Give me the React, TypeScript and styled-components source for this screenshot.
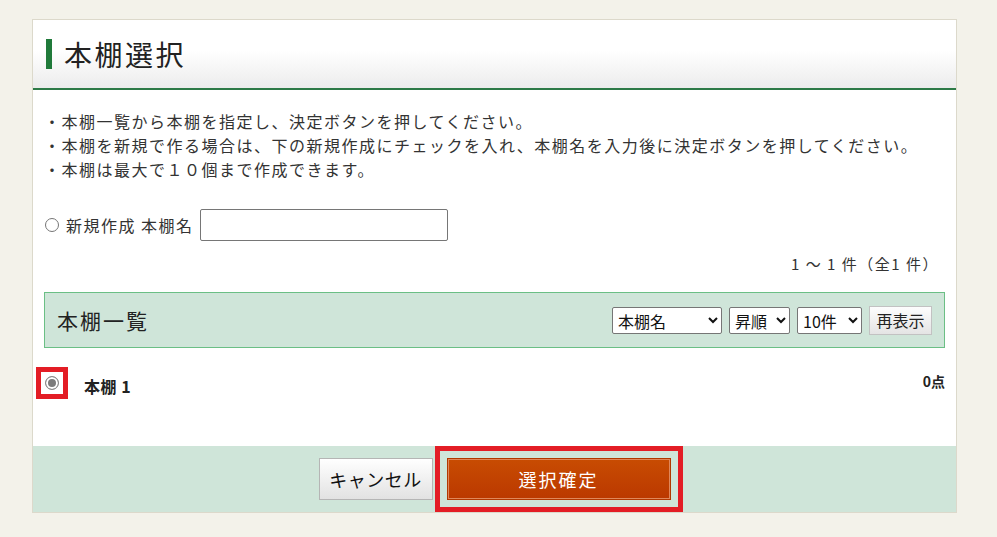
import styled, { createGlobalStyle } from 'styled-components';

const GlobalStyle = createGlobalStyle`
  body {
    margin: 0;
    background: #f3f2ea;
    font-family: "Noto Sans CJK JP", "Noto Sans", sans-serif;
    color: #333;
  }
`;

const Page = styled.div`
  padding: 19px 0 24px 32px;
`;

const Panel = styled.div`
  width: 923px;
  background: #fff;
  border: 1px solid #dcd9cb;
`;

const Header = styled.div`
  display: flex;
  align-items: center;
  height: 68px;
  padding-left: 13px;
  background: linear-gradient(to bottom, #fff 0%, #fff 45%, #ececec 100%);
  border-bottom: 2px solid #2d7a47;
`;

const TitleBar = styled.span`
  width: 6px;
  height: 30px;
  background: #207a3a;
  margin-right: 12px;
`;

const Title = styled.h1`
  margin: 0;
  font-size: 28px;
  font-weight: 400;
  letter-spacing: 2.5px;
  color: #222;
`;

const Body = styled.div`
  padding: 19px 11px 28px;
`;

const Notes = styled.ul`
  margin: 0;
  padding: 0;
  list-style: none;
  font-size: 16px;
  line-height: 24px;
  letter-spacing: 1.5px;
`;

const NewRow = styled.div`
  display: flex;
  align-items: center;
  height: 32px;
  margin-top: 28px;
  padding-left: 1px;
  font-size: 16px;
  letter-spacing: 1.5px;
`;

const Radio = styled.input.attrs({ type: 'radio' })`
  appearance: none;
  margin: 0;
  width: 14px;
  height: 14px;
  border: 1px solid #767676;
  border-radius: 50%;
  background: #fff;

  &:checked {
    border-color: #8a8a8a;
    background: #7b7b7b;
    box-shadow: inset 0 0 0 2px #fff;
  }
`;

const Label = styled.label`
  margin-left: 7px;
  margin-right: 6px;
`;

const TextInput = styled.input`
  width: 248px;
  height: 32px;
  box-sizing: border-box;
  border: 1px solid #767676;
  border-radius: 2px;
  font: inherit;
`;

const Count = styled.div`
  margin-top: 11px;
  padding-right: 6px;
  text-align: right;
  font-size: 15px;
  line-height: 24px;
  letter-spacing: 1.5px;
`;

const ListBar = styled.div`
  display: flex;
  align-items: center;
  justify-content: space-between;
  height: 56px;
  box-sizing: border-box;
  margin-top: 16px;
  padding: 0 12px;
  background: #cfe5d9;
  border: 1px solid #6bbf85;
`;

const ListTitle = styled.h2`
  margin: 0;
  font-size: 21px;
  font-weight: 400;
  letter-spacing: 2px;
  color: #222;
`;

const Controls = styled.div`
  display: flex;
  align-items: center;
  gap: 7px;
`;

const Select = styled.select<{ $w: number }>`
  width: ${(p) => p.$w}px;
  height: 27px;
  border: 1px solid #767676;
  border-radius: 2px;
  background: #fff;
  color: #111;
  font-family: inherit;
  font-size: 16px;
  padding: 0 1px;
`;

const SmallButton = styled.button`
  width: 63px;
  height: 29px;
  border: 1px solid #c2c2c2;
  background: linear-gradient(to bottom, #fdfdfd, #e4e4e4);
  font-family: inherit;
  font-size: 16px;
  color: #222;
  padding: 0;
`;

const ShelfRow = styled.div`
  display: flex;
  align-items: center;
  height: 70px;
  padding-left: 1px;
`;

const Marker = styled.span`
  display: inline-flex;
  outline: 5px solid #e31d25;
  outline-offset: 4px;
`;

const ShelfName = styled.span`
  margin-left: 25px;
  margin-top: 6px;
  font-size: 16px;
  font-weight: 700;
  letter-spacing: 0.5px;
  color: #222;
`;

const Points = styled.span`
  margin-left: auto;
  margin-top: -4px;
  font-size: 14px;
  font-weight: 700;
  color: #222;
`;

const Footer = styled.div`
  display: flex;
  align-items: center;
  justify-content: center;
  gap: 14px;
  height: 66px;
  background: #cfe5d9;
`;

const CancelButton = styled.button`
  width: 114px;
  height: 42px;
  border: 1px solid #b5b5b5;
  background: linear-gradient(to bottom, #ffffff, #e2e2e2);
  font-family: inherit;
  font-size: 18px;
  letter-spacing: 0.5px;
  color: #111;
  padding: 0;
`;

const ConfirmButton = styled.button`
  width: 224px;
  height: 42px;
  border: 1px solid #b23800;
  box-shadow: inset 0 0 0 1px #e0875a;
  background: linear-gradient(to bottom, #c84c02, #bb3800);
  font-family: inherit;
  font-size: 18px;
  letter-spacing: 2px;
  color: #fff;
  padding: 0;
  outline: 5px solid #e31d25;
  outline-offset: 7px;
`;

export default function App() {
  return (
    <>
      <GlobalStyle />
      <Page>
        <Panel>
          <Header>
            <TitleBar />
            <Title>本棚選択</Title>
          </Header>
          <Body>
            <Notes>
              <li>・本棚一覧から本棚を指定し、決定ボタンを押してください。</li>
              <li>・本棚を新規で作る場合は、下の新規作成にチェックを入れ、本棚名を入力後に決定ボタンを押してください。</li>
              <li>・本棚は最大で１０個まで作成できます。</li>
            </Notes>
            <NewRow>
              <Radio name="shelf" id="new-shelf" />
              <Label htmlFor="new-shelf">新規作成 本棚名</Label>
              <TextInput type="text" />
            </NewRow>
            <Count>1 ～ 1 件（全1 件）</Count>
            <ListBar>
              <ListTitle>本棚一覧</ListTitle>
              <Controls>
                <Select $w={110} defaultValue="name">
                  <option value="name">本棚名</option>
                </Select>
                <Select $w={61} defaultValue="asc">
                  <option value="asc">昇順</option>
                </Select>
                <Select $w={65} defaultValue="10">
                  <option value="10">10件</option>
                </Select>
                <SmallButton>再表示</SmallButton>
              </Controls>
            </ListBar>
            <ShelfRow>
              <Marker>
                <Radio name="shelf" defaultChecked />
              </Marker>
              <ShelfName>本棚 1</ShelfName>
              <Points>0点</Points>
            </ShelfRow>
          </Body>
          <Footer>
            <CancelButton>キャンセル</CancelButton>
            <ConfirmButton>選択確定</ConfirmButton>
          </Footer>
        </Panel>
      </Page>
    </>
  );
}
